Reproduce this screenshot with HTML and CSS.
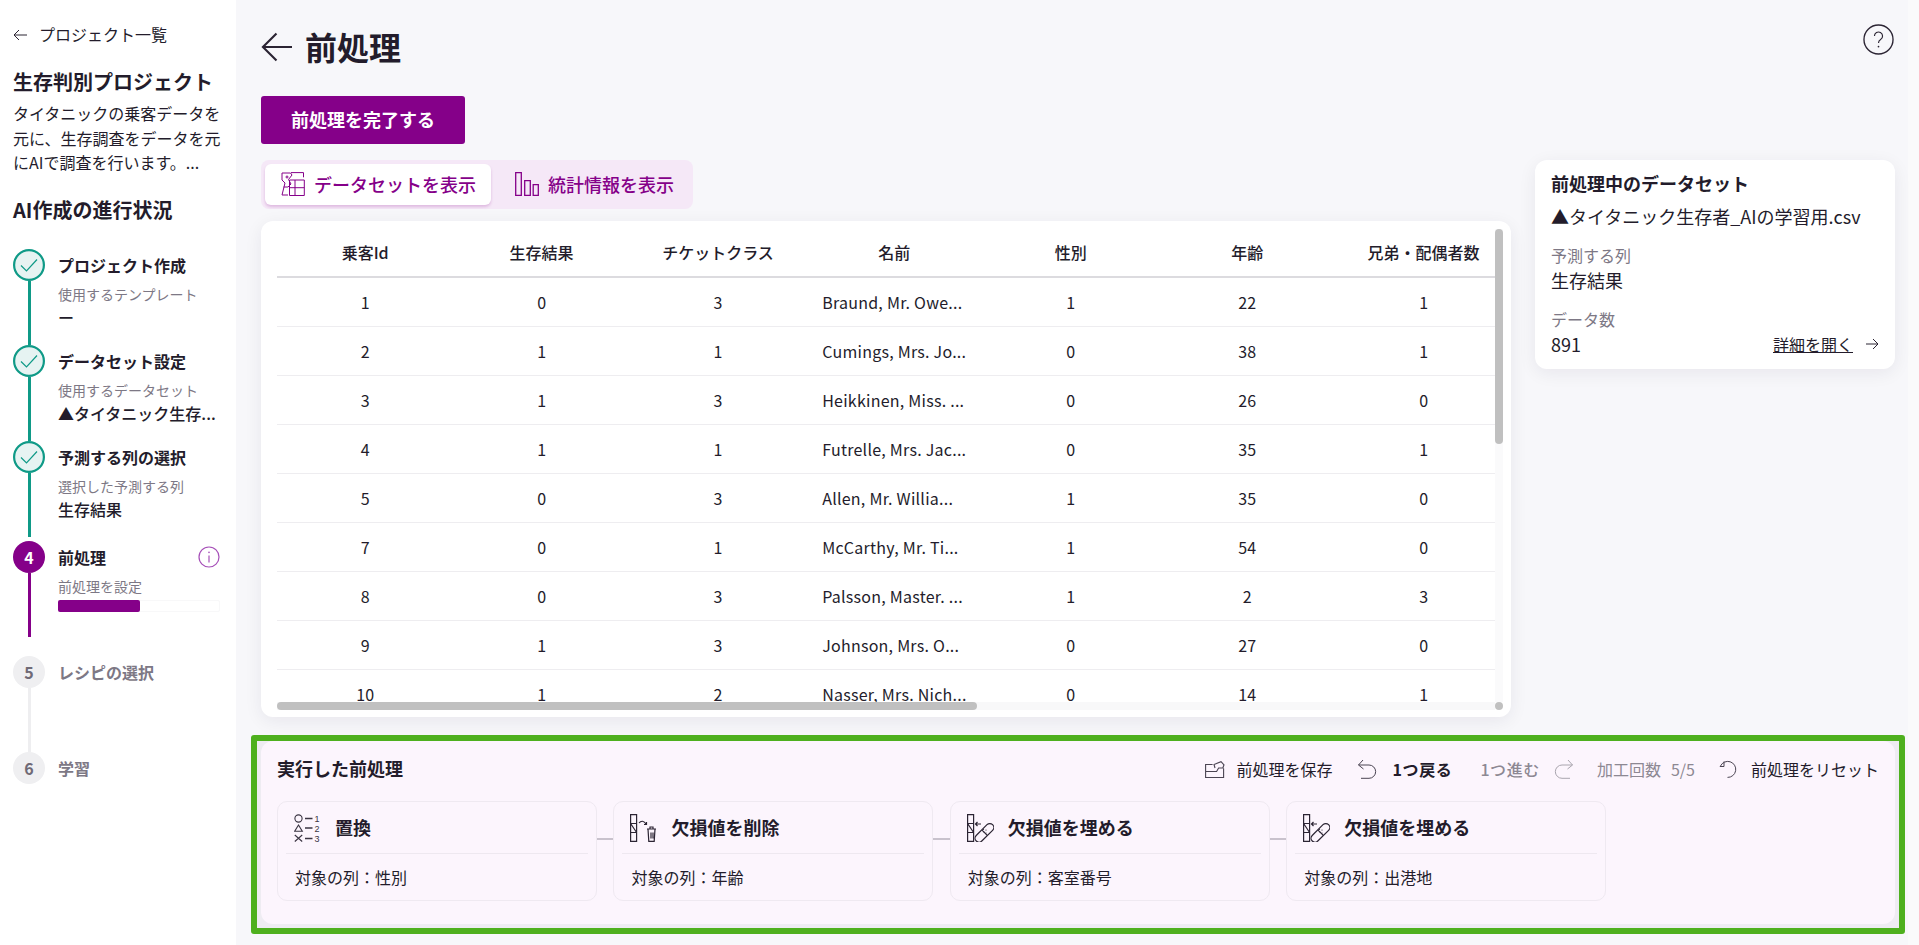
FILE: index.html
```html
<!DOCTYPE html>
<html lang="ja">
<head>
<meta charset="utf-8">
<title>前処理</title>
<link rel="stylesheet" href="styles.css">
</head>
<body>
<svg class="sprite" width="0" height="0" aria-hidden="true">
  <symbol id="i-check" viewBox="0 0 32 32"><circle cx="16" cy="16" r="14.900" fill="#e6f3f2" stroke="#0f9a87" stroke-width="2.200"/><path d="M8 16.500l5.500 5.500L24 10.500" fill="none" stroke="#0f9a87" stroke-width="1.200"/></symbol>
  <symbol id="i-bandcol" viewBox="0 0 27 28"><g fill="none" stroke="#2b2433" stroke-width="1.200"><path d="M.6.6h6v26.800h-6zM.6 9.500h6M.6 18.500h6M.6 9.500l6 9"/><path d="M14 10H8.500M10.500 8L8.500 10l2 2"/><path d="M9.200 21.500L20 10.700a3.900 3.900 0 0 1 5.600 5.600L14.800 27a3.900 3.900 0 0 1-5.600-5.500zM14.500 15.700l5.500 5.500"/></g><g fill="#2b2433"><circle cx="17" cy="18" r=".6"/><circle cx="19" cy="16" r=".6"/><circle cx="19" cy="19" r=".6"/><circle cx="16.500" cy="15.500" r=".6"/></g></symbol>
</svg>

<aside class="sidebar">
  <a class="back"><svg class="back-ico" viewBox="0 0 14 12"><path d="M14 6H1M6 1L1 6l5 5" fill="none" stroke="#2b2433" stroke-width="1"/></svg>プロジェクト一覧</a>
  <h2 class="proj-title">生存判別プロジェクト</h2>
  <p class="proj-desc">タイタニックの乗客データを元に、生存調査をデータを元にAIで調査を行います。...</p>
  <h2 class="prog-title">AI作成の進行状況</h2>
  <ol class="steps">
    <li class="step h96">
      <div class="rail"><svg class="circle-svg"><use href="#i-check"/></svg><span class="line teal"></span></div>
      <div class="step-body"><div class="step-name">プロジェクト作成</div><div class="step-sub">使用するテンプレート</div><div class="step-val">ー</div></div>
    </li>
    <li class="step h96">
      <div class="rail"><svg class="circle-svg"><use href="#i-check"/></svg><span class="line teal"></span></div>
      <div class="step-body"><div class="step-name">データセット設定</div><div class="step-sub">使用するデータセット</div><div class="step-val">▲タイタニック生存...</div></div>
    </li>
    <li class="step h100">
      <div class="rail"><svg class="circle-svg"><use href="#i-check"/></svg><span class="line teal gap4"></span></div>
      <div class="step-body"><div class="step-name">予測する列の選択</div><div class="step-sub">選択した予測する列</div><div class="step-val">生存結果</div></div>
    </li>
    <li class="step h115">
      <div class="rail"><span class="num num-on">4</span><span class="line purple gap19"></span></div>
      <div class="step-body">
        <div class="step-row"><div class="step-name">前処理</div><svg class="info" viewBox="0 0 22 22"><circle cx="11" cy="11" r="10" fill="none" stroke="#a64fb8" stroke-width="1.200"/><path d="M11 9.500V16.500" stroke="#a64fb8" stroke-width="1.200"/><circle cx="11" cy="6.400" r=".8" fill="#a64fb8"/></svg></div>
        <div class="step-sub">前処理を設定</div>
        <div class="progress"><span class="progress-fill"></span></div>
      </div>
    </li>
    <li class="step h96">
      <div class="rail"><span class="num">5</span><span class="line grey"></span></div>
      <div class="step-body"><div class="step-name off">レシピの選択</div></div>
    </li>
    <li class="step h32">
      <div class="rail"><span class="num">6</span></div>
      <div class="step-body"><div class="step-name off">学習</div></div>
    </li>
  </ol>
</aside>

<main class="main">
  <header class="page-head">
    <svg class="big-arrow" viewBox="0 0 32 30"><path d="M32 15H2M16 1L2 15l14 14" fill="none" stroke="#2b2433" stroke-width="2.200"/></svg>
    <h1 class="page-title">前処理</h1>
    <svg class="help" viewBox="0 0 32 32"><circle cx="16" cy="16" r="15" fill="none" stroke="#2b2433" stroke-width="1.400"/><path d="M11.800 12.500a4.200 4.200 0 1 1 6.400 3.600c-1.500.9-2.200 1.700-2.200 3.400" fill="none" stroke="#2b2433" stroke-width="1.200"/><circle cx="16" cy="23.300" r=".9" fill="#2b2433"/></svg>
  </header>
  <button class="primary">前処理を完了する</button>

  <div class="content">
    <div class="left">
      <div class="tabs">
        <div class="tab tab-on">
          <svg class="tab-ico" viewBox="0 0 24 24"><g fill="none" stroke="#850089" stroke-width="1"><path d="M10 .6h12.500v4.700M23.300 8H8.500v15.500h14.800zM8.500 15.700h14.800M14 8v15.500"/><path d="M1 1h8.500l1.500 2-3.500 4.500L10 12 7 15H2.500M1 1v7l3 3M4 11l-3 12h6"/><circle cx="6" cy="5" r="1"/></g></svg>
          データセットを表示
        </div>
        <div class="tab">
          <svg class="tab-ico" viewBox="0 0 24 24"><g fill="none" stroke="#850089" stroke-width="1.300"><path d="M.7.7h5.600v22.600H.7zM9.700 8.700h5.600v14.600H9.700zM18.200 12.700h5.100v10.600h-5.100z"/></g></svg>
          統計情報を表示
        </div>
      </div>
      <section class="table-card">
        <div class="table-wrap">
          <div class="scroller">
            <table class="data">
              <thead><tr><th>乗客Id</th><th>生存結果</th><th>チケットクラス</th><th>名前</th><th>性別</th><th>年齢</th><th>兄弟・配偶者数</th></tr></thead>
              <tbody>
                <tr><td>1</td><td>0</td><td>3</td><td class="name">Braund, Mr. Owe...</td><td>1</td><td>22</td><td>1</td></tr>
                <tr><td>2</td><td>1</td><td>1</td><td class="name">Cumings, Mrs. Jo...</td><td>0</td><td>38</td><td>1</td></tr>
                <tr><td>3</td><td>1</td><td>3</td><td class="name">Heikkinen, Miss. ...</td><td>0</td><td>26</td><td>0</td></tr>
                <tr><td>4</td><td>1</td><td>1</td><td class="name">Futrelle, Mrs. Jac...</td><td>0</td><td>35</td><td>1</td></tr>
                <tr><td>5</td><td>0</td><td>3</td><td class="name">Allen, Mr. Willia...</td><td>1</td><td>35</td><td>0</td></tr>
                <tr><td>7</td><td>0</td><td>1</td><td class="name">McCarthy, Mr. Ti...</td><td>1</td><td>54</td><td>0</td></tr>
                <tr><td>8</td><td>0</td><td>3</td><td class="name">Palsson, Master. ...</td><td>1</td><td>2</td><td>3</td></tr>
                <tr><td>9</td><td>1</td><td>3</td><td class="name">Johnson, Mrs. O...</td><td>0</td><td>27</td><td>0</td></tr>
                <tr><td>10</td><td>1</td><td>2</td><td class="name">Nasser, Mrs. Nich...</td><td>0</td><td>14</td><td>1</td></tr>
              </tbody>
            </table>
          </div>
          <div class="sb-v"><span class="sb-v-thumb"></span></div>
          <div class="sb-h"><span class="sb-h-thumb"></span></div>
          <span class="sb-corner"></span>
        </div>
      </section>
    </div>
    <aside class="info-card">
      <h3 class="info-title">前処理中のデータセット</h3>
      <div class="info-file">▲タイタニック生存者_AIの学習用.csv</div>
      <div class="info-label first">予測する列</div>
      <div class="info-val">生存結果</div>
      <div class="info-label second">データ数</div>
      <div class="info-foot">
        <span class="info-val">891</span>
        <a class="detail"><span class="detail-link">詳細を開く</span><svg class="detail-ico" viewBox="0 0 13 12"><path d="M0 6h12M7 1l5 5-5 5" fill="none" stroke="#2b2433" stroke-width="1"/></svg></a>
      </div>
    </aside>
  </div>

  <div class="highlight">
    <section class="panel">
      <div class="panel-head">
        <h3 class="panel-title">実行した前処理</h3>
        <div class="tools">
          <span class="tool t-save"><svg class="t-ico" viewBox="0 0 20 17"><g fill="none" stroke="#4a4452" stroke-width="1.100"><path d="M.6 6.500v10h18V7.500M.6 10.500h11l2-3.500h5M.6 6.500V3.500h7M10 7l-1-3.500L16 .7 19 3.800 17.800 7"/></g></svg>前処理を保存</span>
          <span class="tool strong dark t-undo"><svg class="t-ico u" viewBox="0 0 20 20"><path d="M6 1L1.500 6l5 4M1.500 6H12a6.300 6.300 0 0 1 0 13.300H4" fill="none" stroke="#4a4452" stroke-width="1"/></svg>1つ戻る</span>
          <span class="tool muted strong t-redo">1つ進む<svg class="t-ico u" viewBox="0 0 20 20"><path d="M14 1l4.500 5-5 4M18.500 6H8a6.300 6.300 0 0 0 0 13.300h8" fill="none" stroke="#a9a5ae" stroke-width="1"/></svg></span>
          <span class="tool muted t-count"><span>加工回数</span><span>5/5</span></span>
          <span class="tool t-reset"><svg class="t-ico r" viewBox="0 0 18 18"><path d="M5 1.500v5H0.800M1.500 6A8 8 0 1 1 8.500 17.400" fill="none" stroke="#4a4452" stroke-width="1"/></svg>前処理をリセット</span>
        </div>
      </div>
      <div class="cards">
        <article class="p-card">
          <div class="p-head">
            <svg class="p-ico" viewBox="0 0 27 28"><g fill="none" stroke="#3a3442" stroke-width="1.100"><circle cx="4.500" cy="4.500" r="3.600"/><path d="M4.500 11l3.800 6.200H.7zM.8 21l7.400 6.500M8.200 21L.8 27.500"/><path d="M11 4.500h7.500M11 14h7.500M11 24.500h7.500" stroke-width="1.400"/></g><text x="20.500" y="8" class="p-dig">1</text><text x="20.500" y="17.500" class="p-dig">2</text><text x="20.500" y="28" class="p-dig">3</text></svg>
            <span class="p-title">置換</span>
          </div>
          <div class="p-body">対象の列：性別</div>
        </article>
        <span class="link"></span>
        <article class="p-card">
          <div class="p-head">
            <svg class="p-ico" viewBox="0 0 27 28"><g fill="none" stroke="#2b2433" stroke-width="1.200"><path d="M.6.6h6v26.800h-6zM.6 9.500h6M.6 18.500h6M.6 9.500l6 9"/><path d="M9 9c2-2.500 5-2.500 7 1M16.500 8v2.500h-2.500"/><path d="M17 15h9M20 15v-2h3v2M18 15l.8 12.400h5.400L25 15M21 18.500v6M23 18.500v6"/></g></svg>
            <span class="p-title">欠損値を削除</span>
          </div>
          <div class="p-body">対象の列：年齢</div>
        </article>
        <span class="link"></span>
        <article class="p-card">
          <div class="p-head"><svg class="p-ico"><use href="#i-bandcol"/></svg><span class="p-title">欠損値を埋める</span></div>
          <div class="p-body">対象の列：客室番号</div>
        </article>
        <span class="link"></span>
        <article class="p-card">
          <div class="p-head"><svg class="p-ico"><use href="#i-bandcol"/></svg><span class="p-title">欠損値を埋める</span></div>
          <div class="p-body">対象の列：出港地</div>
        </article>
      </div>
    </section>
  </div>
</main>
</body>
</html>
```
FILE: styles.css
```css
* { box-sizing: border-box; margin: 0; padding: 0; }
html, body { height: 945px; overflow: hidden; }
body {
  display: flex;
  font-family: "Noto Sans CJK JP", "Noto Sans", sans-serif;
  color: #231c2b;
  background: #f7f7fa;
}
.sprite { position: absolute; }

/* sidebar */
.sidebar {
  width: 236px;
  flex: none;
  height: 945px;
  background: #fff;
  padding: 21px 15px 0 13px;
  box-shadow: 1px 0 4px rgba(0, 0, 0, .04);
}
.back { display: flex; align-items: center; height: 26px; font-size: 16px; line-height: 26px; }
.back-ico { width: 14px; height: 12px; margin: 1px 12px 0 0; }
.proj-title { margin-top: 20px; font-size: 20px; line-height: 30px; font-weight: 700; white-space: nowrap; }
.proj-desc { margin-top: 4px; font-size: 16px; line-height: 24.5px; }
.prog-title { margin-top: 20px; font-size: 20px; line-height: 30px; font-weight: 700; }
.steps { list-style: none; margin: 24.500px 1px 0 0; }
.step { display: flex; gap: 13px; }
.h96 { height: 96px; }
.h100 { height: 100px; }
.h115 { height: 115px; }
.h32 { height: 32px; }
.rail { width: 32px; flex: none; display: flex; flex-direction: column; align-items: center; }
.circle-svg { width: 32px; height: 32px; flex: none; }
.line { width: 3px; flex: 1; margin-left: 1px; }
.teal { background: #0f9a87; }
.purple { background: #850089; }
.grey { background: #eeeef0; }
.gap4 { margin-bottom: 4px; }
.gap19 { margin-bottom: 19px; }
.num {
  width: 32px; height: 32px; flex: none; border-radius: 50%;
  background: #efeff1; color: #6f6a76;
  font-size: 16px; font-weight: 700; line-height: 32px; text-align: center;
}
.num-on { background: #850089; color: #fff; }
.step-body { flex: 1; min-width: 0; }
.step-row { display: flex; justify-content: space-between; align-items: center; }
.step-name { font-size: 16px; line-height: 32px; font-weight: 700; }
.step-name.off { color: #7d7885; }
.step-sub { margin-top: 3px; font-size: 14px; line-height: 20px; color: #7d7885; white-space: nowrap; }
.step-val { font-size: 16px; line-height: 26px; font-weight: 500; white-space: nowrap; }
.info { width: 22px; height: 22px; }
.progress { margin-top: 4px; height: 12px; border: 1px solid #f8f8f9; border-radius: 2px; position: relative; }
.progress-fill { position: absolute; left: -1px; top: -1px; width: 82px; height: 12px; background: #850089; border-radius: 2px; }

/* main */
.main {
  flex: 1; min-width: 0; padding: 24px 24px 0 25px;
  background: linear-gradient(to left, #fafafb 11px, #f7f7fa 11px);
}
.page-head { display: flex; align-items: center; height: 46px; }
.big-arrow { width: 31px; height: 30px; margin-right: 13px; }
.page-title { font-size: 32px; line-height: 44px; padding-bottom: 2px; font-weight: 700; }
.help { width: 31px; height: 31px; margin-left: auto; margin-right: 1px; margin-top: -16px; }
.primary {
  display: block; margin-top: 26px; width: 204px; height: 48px; padding-bottom: 2px;
  border: 0; border-radius: 3px; background: #850089; color: #fff;
  font: 700 18px/46px "Noto Sans CJK JP", sans-serif;
}
.content { display: flex; gap: 24px; margin-top: 16px; align-items: flex-start; }
.left { width: 1250px; flex: none; }
.tabs {
  display: inline-flex; height: 49px; padding: 4px;
  background: #f5e8f7; border-radius: 8px;
}
.tab {
  display: flex; align-items: center; gap: 9px;
  padding: 0 16px 2px; height: 41px; width: 226px;
  color: #850089; font-size: 18px; font-weight: 500; border-radius: 6px; white-space: nowrap;
}
.tab + .tab { width: 198px; padding: 0 0 2px 24px; }
.tab-on { background: #fff; box-shadow: 0 2px 3px rgba(133, 0, 137, .2); }
.tab-ico { width: 24px; height: 24px; flex: none; }

.table-card {
  margin-top: 12px; height: 496px; padding: 8px 8px 8px 16px;
  background: #fff; border-radius: 12px;
  box-shadow: 0 4px 18px rgba(30, 20, 50, .07);
}
.table-wrap { position: relative; height: 481px; }
.scroller { width: 1218px; height: 480px; overflow: hidden; }
.data { border-collapse: collapse; table-layout: fixed; width: 1234.8px; font-size: 16px; }
.data th, .data td { width: 176.4px; text-align: center; }
.data th { height: 48px; padding-bottom: 2px; font-size: 16px; font-weight: 500; border-bottom: 2px solid #dcdbdf; white-space: nowrap; }
.data td { height: 49px; border-bottom: 1px solid #eeedf0; font-weight: 400; }
.data td.name { text-align: left; padding-left: 16px; letter-spacing: .25px; white-space: nowrap; }
.sb-v { position: absolute; right: 0; top: 0; bottom: 8px; width: 8px; background: #fafafb; }
.sb-v-thumb { display: block; width: 8px; height: 215px; border-radius: 4px; background: #c0c0c0; }
.sb-h { position: absolute; left: 0; bottom: 0; right: 8px; height: 8px; background: #f8f8f9; }
.sb-h-thumb { display: block; width: 700px; height: 8px; border-radius: 4px; background: #c0c0c0; }
.sb-corner { position: absolute; right: 0; bottom: 0; width: 8px; height: 8px; border-radius: 50%; background: #c0c0c0; }

.info-card {
  width: 360px; height: 209px; padding: 8px 16px 0;
  background: #fff; border-radius: 12px;
  box-shadow: 0 4px 18px rgba(30, 20, 50, .07);
}
.info-title { font-size: 18px; line-height: 30px; font-weight: 700; }
.info-file { margin-top: 3px; font-size: 18px; line-height: 30px; white-space: nowrap; }
.info-label { font-size: 16px; line-height: 24px; color: #7d7885; }
.info-label.first { margin-top: 12px; }
.info-label.second { margin-top: 14px; }
.info-val { font-size: 18px; line-height: 26px; }
.info-foot { display: flex; justify-content: space-between; align-items: center; }
.detail { display: flex; align-items: center; font-size: 16px; gap: 13px; }
.detail-link { text-decoration: underline; }
.detail-ico { width: 13px; height: 12px; }

/* highlighted panel */
.highlight {
  margin: 18px -10px 0;
  padding: 0 4px 4px;
  border: 6px solid #4eb01e;
  border-radius: 3px;
  background: #eeecf2;
}
.panel { height: 183px; padding: 14px 16px 0; background: #fcf5fd; border-radius: 12px; }
.panel-head { display: flex; justify-content: space-between; align-items: center; height: 28px; }
.panel-title { font-size: 18px; line-height: 26px; padding-bottom: 2px; font-weight: 700; }
.tools { display: flex; align-items: center; }
.tool { display: flex; align-items: center; font-size: 16px; line-height: 24px; white-space: nowrap; }
.strong { font-weight: 500; letter-spacing: .6px; }
.dark { font-weight: 700; }
.muted { color: #8d8893; }
.t-ico { flex: none; }
.t-save .t-ico { width: 20px; height: 17px; margin-right: 12px; }
.t-undo { margin-left: 24px; }
.t-undo .t-ico { width: 20px; height: 20px; margin-right: 16px; }
.t-redo { margin-left: 28px; }
.t-redo .t-ico { width: 20px; height: 20px; margin-left: 14px; }
.t-count { margin-left: 23px; gap: 10px; }
.t-reset { margin-left: 24px; }
.t-reset .t-ico { width: 18px; height: 18px; margin-right: 14px; }
.cards { display: flex; align-items: flex-start; margin-top: 18px; }
.p-card { width: 320px; height: 100px; flex: none; border: 1px solid #efe9f1; border-radius: 10px; }
.link { width: 16.4px; height: 2px; flex: none; margin-top: 37px; background: #c9c2cd; }
.p-head { display: flex; align-items: center; gap: 14px; height: 52px; margin: 0 8px; padding: 0 8px; border-bottom: 1px solid #eee8f0; }
.p-ico { width: 27px; height: 28px; flex: none; }
.p-title { font-size: 18px; font-weight: 700; line-height: 26px; padding-bottom: 2px; }
.p-body { padding: 0 17px 1px; font-size: 16px; line-height: 46px; }
.p-dig { font: 400 9px "Liberation Sans", sans-serif; fill: #3a3442; }
```
